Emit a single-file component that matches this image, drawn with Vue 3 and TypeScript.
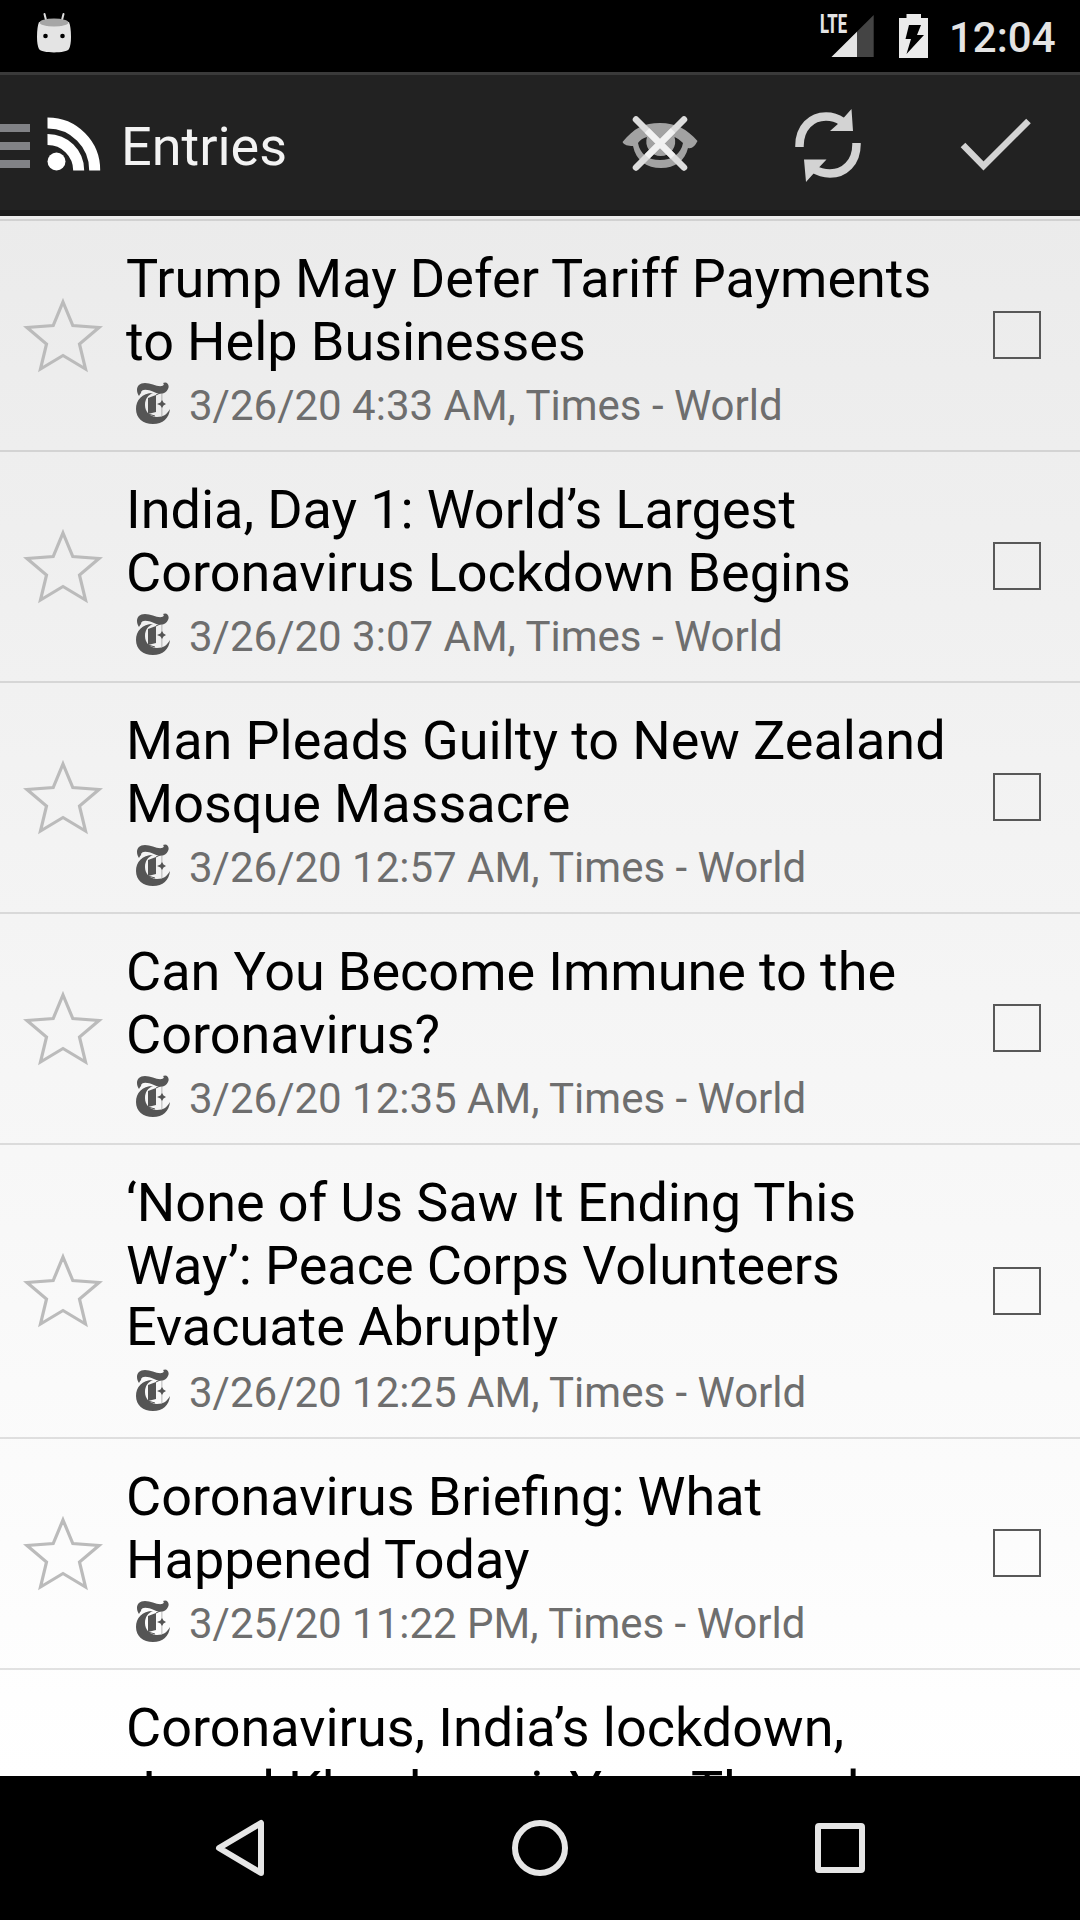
<script setup lang="ts">
interface Entry {
  lines: string[]
  meta?: string
}

const entries: Entry[] = [
  { lines: ['Trump May Defer Tariff Payments', 'to Help Businesses'], meta: '3/26/20 4:33 AM, Times - World' },
  { lines: ['India, Day 1: World’s Largest', 'Coronavirus Lockdown Begins'], meta: '3/26/20 3:07 AM, Times - World' },
  { lines: ['Man Pleads Guilty to New Zealand', 'Mosque Massacre'], meta: '3/26/20 12:57 AM, Times - World' },
  { lines: ['Can You Become Immune to the', 'Coronavirus?'], meta: '3/26/20 12:35 AM, Times - World' },
  { lines: ['‘None of Us Saw It Ending This', 'Way’: Peace Corps Volunteers', 'Evacuate Abruptly'], meta: '3/26/20 12:25 AM, Times - World' },
  { lines: ['Coronavirus Briefing: What', 'Happened Today'], meta: '3/25/20 11:22 PM, Times - World' },
  { lines: ['Coronavirus, India’s lockdown,', 'Jamal Khashoggi: Your Thursday'] },
]
</script>

<template>
  <div class="screen">
    <header class="status">
      <svg class="debug" width="36" height="42" viewBox="0 0 36 42">
        <path d="M8.500 2l2 8M27.500 2l-2 8" stroke="#ddd" stroke-width="2" fill="none" stroke-linecap="round" />
        <path d="M3 10Q1 15 1 25 1 33 3 37C5 41.500 31 41.500 33 37Q35 33 35 25 35 15 33 10Z" fill="#e4e4e4" />
        <ellipse cx="18" cy="10.500" rx="14.500" ry="4" fill="#a6a6a6" />
        <circle cx="9.500" cy="24" r="2.300" />
        <circle cx="26.500" cy="24" r="2.300" />
      </svg>
      <div class="signal">
        <span class="lte">LTE</span>
        <svg width="54" height="44" viewBox="0 0 54 44">
          <path d="M53.700 1V43H11.500Z" fill="#444" />
          <path d="M37 17.700V43H11.500Z" fill="#e4e4e4" />
        </svg>
      </div>
      <svg class="battery" width="30" height="44" viewBox="0 0 30 44">
        <path d="M7.500 0H22V4H29V44H0V4H7.500Z" fill="#ebebeb" />
        <path d="M10 11H22L18 21H25L7.500 40 12 25H6.500Z" fill="#000" />
      </svg>
      <span class="clock">12:04</span>
    </header>

    <nav class="bar">
      <svg class="menu" width="30" height="44" viewBox="0 0 30 44">
        <path d="M0 4H30M0 22H30M0 40H30" stroke="#818286" stroke-width="8" />
      </svg>
      <svg class="rss" width="54" height="54" viewBox="0 0 54 54" fill="none" stroke="#fff">
        <circle cx="9.500" cy="44.500" r="9" fill="#fff" stroke="none" />
        <path d="M.5 22.500A31 31 0 0 1 31.700 53.500" stroke-width="11" />
        <path d="M.5 6A47 47 0 0 1 47.700 53.500" stroke-width="11" />
      </svg>
      <h1>Entries</h1>
      <svg class="eye" width="76" height="56" viewBox="0 0 76 56">
        <path
          d="M.5 26C12 12 22 7 38 7S65 13 75.500 25C73 30 70 33 66 32C63 45 53 52 39 52S14 45 11 30C6 30 2 29 .5 26ZM16 27C18 38 26 44 38 44S59 38 61 27C58 24 55 22 52.500 21A14.500 14.500 0 1 1 25 21C21 22 18 24 16 27Z"
          fill="#a2a2a2" fill-rule="evenodd"
        />
        <path d="M14 3.500L62 51.500M62 3.500L14 51.500" stroke="#ddd" stroke-width="6.500" stroke-linecap="round" />
        <path d="M25 14.500L51 40.500M51 14.500L25 40.500" stroke="#f1f1f1" stroke-width="6.500" />
      </svg>
      <svg class="sync" width="66" height="74" viewBox="0 0 66 74">
        <g fill="none" stroke="#d3d3d3" stroke-width="8.500">
          <path d="M4.500 38C4 18 17 7.500 31 7.500Q40 7.500 47 12.500" />
          <path d="M61.500 34C62 54 49 64.500 35 64.500Q26 64.500 18 59.500" />
        </g>
        <path d="M56.500 0L58 22H35L44 14Z M11 73L9 50.500H31.500L23 59.500Z" fill="#d3d3d3" />
      </svg>
      <svg class="check" width="72" height="54" viewBox="0 0 72 54">
        <path d="M3 27L23.500 48 68.500 3" fill="none" stroke="#d3d3d3" stroke-width="6.500" />
      </svg>
    </nav>

    <main class="list">
      <article v-for="(entry, i) in entries" :key="i" class="entry" :class="{ partial: !entry.meta }">
        <svg v-if="entry.meta" class="star" width="80" height="78" viewBox="0 0 80 78">
          <path d="M40 5L49.800 28.500 76 30.500 56.500 47 62.500 72 40 58.500 17.500 72 23.500 47 4 30.500 30.200 28.500Z" fill="none" stroke="#bbb" stroke-width="3.200" />
        </svg>
        <div class="body">
          <h2>
            <span v-for="line in entry.lines" :key="line">{{ line }}</span>
          </h2>
          <div v-if="entry.meta" class="meta">
            <svg class="feed" width="34" height="42" viewBox="0 0 34 42" fill="#555">
              <path d="M3 14C-1 8 1 1 9 1C15 1 21 5 26 4Q29 3 27 1C31-1 34 3 32 7C30 12 24 13 18 10C11 7 5 7 5 11Q4 12 3 14Z" />
              <path d="M17 11C12 13 9 17 9 23C9 30 14 35 21 35C28 35 31 32 34 27C33 36 27 42 17 42C7 42 0 36 0 27C0 18 6 11 17 11Z" />
              <path d="M12 16L20 13V30L12 32Z" />
              <path d="M20 13L24 11M12 32L19 34" stroke="#555" stroke-width="1" />
              <path d="M26 18L27.500 20.500 30 22 27.500 23.500 26 26 24.500 23.500 21 22 24.500 20.500Z" />
              <path d="M25.500 12H26.300V34H25.500Z" opacity=".5" />
            </svg>
            <span>{{ entry.meta }}</span>
          </div>
        </div>
        <span v-if="entry.meta" class="box"></span>
      </article>
    </main>

    <footer class="nav">
      <svg width="56" height="60" viewBox="0 0 56 60">
        <path d="M49 5V55L7 30Z" fill="none" stroke="#e6e6e6" stroke-width="6" stroke-linejoin="round" />
      </svg>
      <svg width="60" height="60" viewBox="0 0 60 60">
        <circle cx="30" cy="30" r="25" fill="none" stroke="#e6e6e6" stroke-width="6" />
      </svg>
      <svg width="56" height="60" viewBox="0 0 56 60">
        <rect x="6" y="8" width="44" height="44" rx="1" fill="none" stroke="#e6e6e6" stroke-width="6" />
      </svg>
    </footer>
  </div>
</template>

<style>
body {
  margin: 0;
}
</style>

<style scoped>
.screen {
  width: 1080px;
  height: 1920px;
  display: flex;
  flex-direction: column;
  overflow: hidden;
  background: #000;
  font-family: Roboto, "Noto Sans", sans-serif;
}
svg {
  display: block;
  flex: none;
}
.status {
  height: 72px;
  flex: none;
  display: flex;
  align-items: flex-start;
}
.debug {
  margin: 12px auto 0 36px;
}
.signal {
  display: flex;
  margin-top: 14px;
  width: 54px;
  position: relative;
}
.lte {
  position: absolute;
  left: 0;
  top: 0;
  font-size: 26px;
  line-height: 21px;
  font-weight: 800;
  color: #e4e4e4;
  transform: scaleX(0.64);
  transform-origin: 0 0;
}
.battery {
  margin: 14px 0 0 25px;
}
.clock {
  width: 131px;
  margin-left: 20px;
  margin-top: 13px;
  font-size: 42px;
  line-height: 49px;
  font-weight: 500;
  color: #e4e4e4;
}
.bar {
  height: 144px;
  box-sizing: border-box;
  flex: none;
  display: flex;
  align-items: flex-start;
  background: #222;
  border-top: 3px solid #3a3a3a;
  border-bottom: 6px solid #1b1b1b;
}
.menu {
  margin-top: 49px;
}
.rss {
  margin: 42px 0 0 17px;
}
h1 {
  margin: 40px auto 0 20px;
  font-size: 54px;
  line-height: 63px;
  font-weight: 400;
  color: #f3f3f3;
}
.eye {
  margin-top: 41px;
}
.sync {
  margin: 34px 0 0 97px;
}
.check {
  margin: 43px 48px 0 99px;
}
.list {
  height: 1560px;
  box-sizing: border-box;
  flex: none;
  overflow: hidden;
  padding-top: 3px;
  background: linear-gradient(#ebebeb, #fff);
}
.list::before {
  content: "";
  display: block;
  height: 2px;
  background: rgba(0, 0, 0, 0.11);
}
.entry {
  display: flex;
  align-items: center;
  border-bottom: 2px solid rgba(0, 0, 0, 0.11);
}
.partial {
  padding-left: 103px;
}
.star {
  margin: 0 0 0 23px;
}
.body {
  flex: 1;
  margin-left: 23px;
  padding: 26px 0 20px;
}
h2 {
  margin: 0;
  font-size: 54px;
  line-height: 63px;
  font-weight: 400;
  word-spacing: -0.3px;
  color: #000;
}
h2 span {
  display: block;
  white-space: nowrap;
}
h2 span:nth-child(3) {
  line-height: 59px;
  padding-bottom: 4px;
}
.meta {
  display: flex;
  margin-top: 8px;
  height: 49px;
  font-size: 42px;
  line-height: 49px;
  color: #6e6e6e;
  white-space: nowrap;
}
.feed {
  margin: 1px 19px 0 10px;
}
.box {
  width: 48px;
  height: 48px;
  box-sizing: border-box;
  flex: none;
  margin: 0 39px 1px 0;
  border: 2px solid #585858;
}
.nav {
  height: 144px;
  flex: none;
  display: flex;
  align-items: center;
  justify-content: space-between;
  padding: 0 212px;
}
</style>
